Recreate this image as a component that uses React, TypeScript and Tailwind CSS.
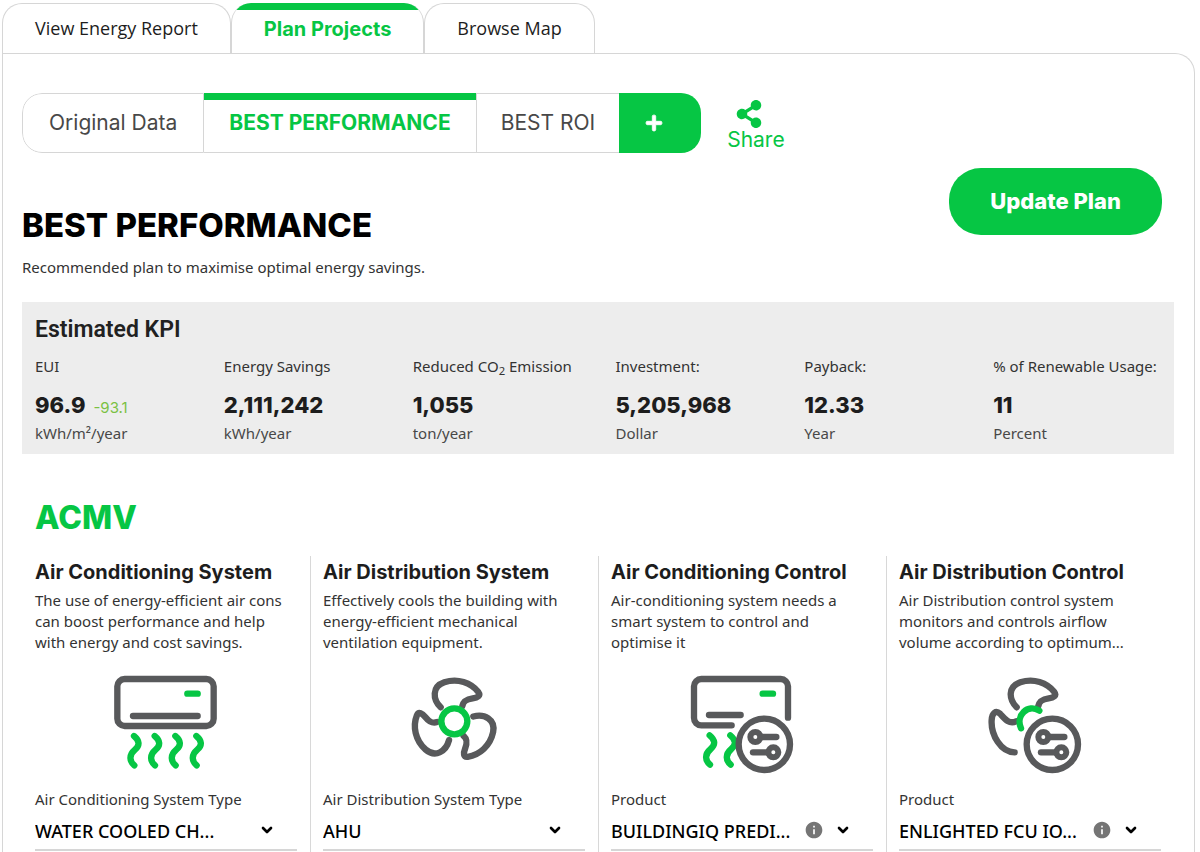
import type { ReactNode } from "react";
import { ChevronDown } from "lucide-react";
import { FaPlus, FaShareAlt } from "react-icons/fa";
import { MdInfo } from "react-icons/md";

type Kpi = {
  label: ReactNode;
  value: string;
  change?: string;
  unit: string;
};

type System = {
  id: string;
  title: string;
  text: string;
  icon: ReactNode;
  field: string;
  option: string;
  info?: boolean;
};

const kpis: Kpi[] = [
  { label: "EUI", value: "96.9", change: "-93.1", unit: "kWh/m²/year" },
  { label: "Energy Savings", value: "2,111,242", unit: "kWh/year" },
  {
    label: (
      <>
        Reduced CO<sub>2</sub> Emission
      </>
    ),
    value: "1,055",
    unit: "ton/year",
  },
  { label: "Investment:", value: "5,205,968", unit: "Dollar" },
  { label: "Payback:", value: "12.33", unit: "Year" },
  { label: "% of Renewable Usage:", value: "11", unit: "Percent" },
];

const GREY = "#58595b";
const GREEN = "#06c644";
const BLADE =
  "M154 142C130 118 127 80 165 67C205 54 245 68 267 96C275 107 264 113 250 115C230 118 222 124 219 138";

function Wave({ x, y = 228 }: { x: number; y?: number }) {
  return (
    <path
      transform={`translate(${x} ${y})`}
      stroke={GREEN}
      d="M0 0C17 14 18 28 3 41C-16 57 -14 75 1 88"
    />
  );
}

// Round badge with two sliders, used on both "control" icons
function ControlBadge({ x }: { x: number }) {
  return (
    <g transform={`translate(${x} 253)`}>
      <circle r="77" fill="white" />
      <circle cx="-27" cy="-22" r="15" strokeWidth="18" />
      <path d="M-10 -22H36" />
      <circle cx="27" cy="24" r="15" strokeWidth="18" />
      <path d="M10 24H-34" />
    </g>
  );
}

function Drawing({ viewBox, children }: { viewBox: string; children: ReactNode }) {
  return (
    <svg
      className="mx-auto size-[120px]"
      viewBox={viewBox}
      fill="none"
      stroke={GREY}
      strokeWidth="19"
      strokeLinecap="round"
      strokeLinejoin="round"
      aria-hidden="true"
    >
      {children}
    </svg>
  );
}

const airConIcon = (
  <Drawing viewBox="50 0 360 360">
    <rect x="84" y="57" width="289" height="141" rx="22" />
    <path d="M131 168H325" />
    <path d="M294 101H325" stroke={GREEN} />
    <Wave x={134} />
    <Wave x={196} />
    <Wave x={258} />
    <Wave x={321} />
  </Drawing>
);

const fanIcon = (
  <Drawing viewBox="14 0 360 360">
    <path d={BLADE} />
    <path d={BLADE} transform="rotate(120 195 184)" />
    <path d={BLADE} transform="rotate(240 195 184)" />
    <circle cx="195" cy="184" r="39" stroke={GREEN} fill="white" />
  </Drawing>
);

const airConControlIcon = (
  <Drawing viewBox="38 0 360 360">
    <path d="M187 196H96a22 22 0 0 1-22-22V79a22 22 0 0 1 22-22H334a22 22 0 0 1 22 22V173" />
    <path d="M119 165H214" />
    <path d="M280 101H311" stroke={GREEN} />
    <Wave x={121} y={226} />
    <Wave x={183} y={226} />
    <ControlBadge x={285} />
  </Drawing>
);

const fanControlIcon = (
  <Drawing viewBox="2 0 360 360">
    <path d={BLADE} transform="translate(-12 0)" />
    <path d="M140 184C118 194 104 174 92 161C80 150 68 158 67 180C64 225 95 277 136 277" />
    <path d="M210 152C176 130 138 166 155 205" stroke={GREEN} />
    <ControlBadge x={249} />
  </Drawing>
);

const systems: System[] = [
  {
    id: "air-conditioning-system",
    title: "Air Conditioning System",
    text: "The use of energy-efficient air cons can boost performance and help with energy and cost savings.",
    icon: airConIcon,
    field: "Air Conditioning System Type",
    option: "WATER COOLED CH...",
  },
  {
    id: "air-distribution-system",
    title: "Air Distribution System",
    text: "Effectively cools the building with energy-efficient mechanical ventilation equipment.",
    icon: fanIcon,
    field: "Air Distribution System Type",
    option: "AHU",
  },
  {
    id: "air-conditioning-control",
    title: "Air Conditioning Control",
    text: "Air-conditioning system needs a smart system to control and optimise it",
    icon: airConControlIcon,
    field: "Product",
    option: "BUILDINGIQ PREDI...",
    info: true,
  },
  {
    id: "air-distribution-control",
    title: "Air Distribution Control",
    text: "Air Distribution control system monitors and controls airflow volume according to optimum...",
    icon: fanControlIcon,
    field: "Product",
    option: "ENLIGHTED FCU IO...",
    info: true,
  },
];

function SystemCard({ system }: { system: System }) {
  return (
    <article className="border-l border-[#d8d8d8] pr-[13px] pl-3 first:border-transparent">
      <h3 className="font-[Inter,sans-serif] text-[20px] leading-8 font-bold whitespace-nowrap text-[#1d1d1d]">
        {system.title}
      </h3>
      <p className="mt-0.5 h-16 pr-2 text-[15px] leading-[21px]">{system.text}</p>
      <div className="mt-1.5">{system.icon}</div>
      <label htmlFor={system.id} className="mt-2 block text-[15px] leading-[22px]">
        {system.field}
      </label>
      <div className="relative mt-[3px] border-b-2 border-[#d6d6d6]">
        <select
          id={system.id}
          className="block h-9 w-full appearance-none bg-transparent pr-16 text-[18px] font-medium text-black"
        >
          <option>{system.option}</option>
        </select>
        {system.info && (
          <button
            type="button"
            aria-label="Product information"
            className="absolute top-[7px] right-[49px] text-[#757575]"
          >
            <MdInfo className="size-5" />
          </button>
        )}
        <ChevronDown
          className="pointer-events-none absolute top-[9px] right-[22px] size-4 text-black"
          strokeWidth={4}
        />
      </div>
    </article>
  );
}

export default function App() {
  return (
    <div className="flex min-h-screen flex-col bg-white pt-[3px] pr-[5px] pl-0.5 font-['Noto_Sans','Open_Sans',sans-serif] text-[#333]">
      {/* Main tabs */}
      <nav className="flex h-[50px] font-['Open_Sans',sans-serif] text-[18px] text-[#1d1d1d]">
        <a
          href="#report"
          className="flex items-center rounded-t-[20px] border border-b-0 border-[#d6d6d6] px-8"
        >
          View Energy Report
        </a>
        <a
          href="#projects"
          className="flex items-center overflow-hidden rounded-t-[20px] border border-y-0 border-[#d6d6d6] font-[Inter,sans-serif] text-[20px] font-bold text-[#06c644]"
        >
          <span className="flex h-full items-center border-t-[7px] border-[#06c644] px-8 pb-1.5">
            Plan Projects
          </span>
        </a>
        <a
          href="#map"
          className="flex items-center rounded-t-[20px] border border-b-0 border-[#d6d6d6] px-8"
        >
          Browse Map
        </a>
      </nav>

      <main className="flex grow flex-col rounded-tr-[20px] border border-b-0 border-[#d6d6d6] pt-[39px] pr-5 pl-[19px]">
        {/* Plan tabs */}
        <div className="flex items-center gap-[26px] font-[Inter,sans-serif] text-[21px]">
          <div className="flex h-[60px] overflow-hidden rounded-[20px] text-[#484848]">
            <button
              type="button"
              className="rounded-l-[20px] border border-[#d6d6d6] px-[26px]"
            >
              Original Data
            </button>
            <button
              type="button"
              className="border-t-[7px] border-b border-t-[#06c644] border-b-[#d6d6d6] px-[25px] pb-1.5 font-bold text-[#06c644]"
            >
              BEST PERFORMANCE
            </button>
            <button type="button" className="border border-r-0 border-[#d6d6d6] px-6">
              BEST ROI
            </button>
            <button
              type="button"
              aria-label="Add plan"
              className="flex w-[82px] items-center justify-center bg-[#06c644] pr-3 text-white"
            >
              <FaPlus className="size-[18px]" stroke="white" strokeWidth={24} />
            </button>
          </div>
          <button type="button" className="flex flex-col items-start pt-1.5 text-[#06c644]">
            <FaShareAlt className="ml-2 h-7 w-7" />
            <span className="leading-6">Share</span>
          </button>
        </div>

        {/* Heading */}
        <div className="mt-[15px] flex items-start justify-between pr-3">
          <div className="pt-[37px]">
            <h1 className="font-[Inter,sans-serif] text-[33px] leading-10 font-extrabold text-black">
              BEST PERFORMANCE
            </h1>
            <p className="mt-2.5 text-[15px] leading-6">
              Recommended plan to maximise optimal energy savings.
            </p>
          </div>
          <button
            type="button"
            className="h-[67px] rounded-[32px] bg-[#06c644] px-[41px] font-[Inter,sans-serif] text-[22px] font-extrabold text-white"
          >
            Update Plan
          </button>
        </div>

        {/* KPI summary */}
        <section className="mt-[23px] bg-[#ededed] px-[13px] pt-[13px] pb-[9px]">
          <h2 className="font-[Roboto,sans-serif] text-[23px] leading-[30px] font-semibold text-[#212121]">
            Estimated KPI
          </h2>
          <dl className="mt-2.5 grid grid-cols-[189fr_189fr_203fr_189fr_189fr_168fr] whitespace-nowrap">
            {kpis.map((kpi) => (
              <div key={kpi.unit}>
                <dt className="text-[15px] leading-[22px]">{kpi.label}</dt>
                <dd className="mt-3 font-[Inter,sans-serif] text-[22px] leading-8 font-extrabold text-[#1d1d1d]">
                  {kpi.value}
                  {kpi.change && (
                    <span className="ml-2 text-[15px] leading-none font-normal text-[#7ac143]">
                      {kpi.change}
                    </span>
                  )}
                </dd>
                <dd className="text-[15px] leading-6 text-[#484848]">{kpi.unit}</dd>
              </div>
            ))}
          </dl>
        </section>

        {/* Air conditioning and ventilation */}
        <section className="mt-11 flex grow flex-col">
          <h2 className="px-[13px] font-[Inter,sans-serif] text-[32px] leading-10 font-extrabold text-[#06c644]">
            ACMV
          </h2>
          <div className="mt-[18px] grid grow grid-cols-4">
            {systems.map((system) => (
              <SystemCard key={system.id} system={system} />
            ))}
          </div>
        </section>
      </main>
    </div>
  );
}
